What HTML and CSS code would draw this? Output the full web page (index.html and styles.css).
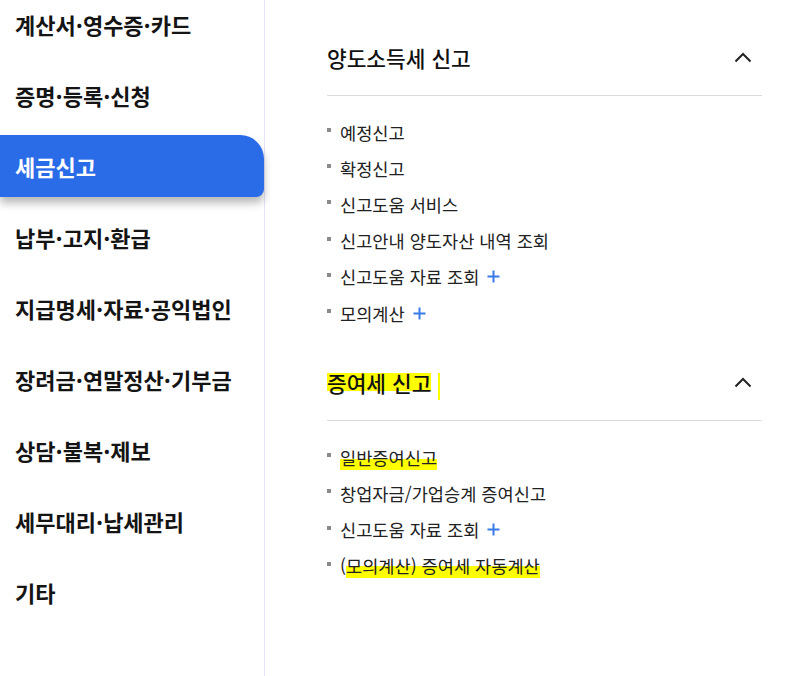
FILE: index.html
```html
<!DOCTYPE html>
<html lang="ko">
<head>
<meta charset="utf-8">
<title>세금신고</title>
<link rel="stylesheet" href="styles.css">
</head>
<body>
<div class="page">
  <nav class="side">
    <ul class="side-list">
      <li class="side-item">계산서·영수증·카드</li>
      <li class="side-item">증명·등록·신청</li>
      <li class="side-item active">세금신고</li>
      <li class="side-item">납부·고지·환급</li>
      <li class="side-item">지급명세·자료·공익법인</li>
      <li class="side-item">장려금·연말정산·기부금</li>
      <li class="side-item">상담·불복·제보</li>
      <li class="side-item">세무대리·납세관리</li>
      <li class="side-item">기타</li>
    </ul>
  </nav>
  <main class="content">
    <section class="group">
      <div class="group-head">
        <h2 class="group-title">양도소득세 신고</h2>
        <svg class="chev" width="18" height="11" viewBox="0 0 18 11"><path d="M1.5 9.5 L9 2 L16.5 9.5" fill="none" stroke="#222" stroke-width="2"/></svg>
      </div>
      <ul class="links">
        <li class="link"><span class="dot"></span>예정신고</li>
        <li class="link"><span class="dot"></span>확정신고</li>
        <li class="link"><span class="dot"></span>신고도움 서비스</li>
        <li class="link"><span class="dot"></span>신고안내 양도자산 내역 조회</li>
        <li class="link"><span class="dot"></span>신고도움 자료 조회<svg class="plus" width="13" height="13" viewBox="0 0 13 13"><path d="M6.5 0.5 V12.5 M0.5 6.5 H12.5" stroke="#3b7be9" stroke-width="2"/></svg></li>
        <li class="link"><span class="dot"></span>모의계산<svg class="plus" width="13" height="13" viewBox="0 0 13 13"><path d="M6.5 0.5 V12.5 M0.5 6.5 H12.5" stroke="#3b7be9" stroke-width="2"/></svg></li>
      </ul>
    </section>
    <section class="group">
      <div class="group-head">
        <h2 class="group-title"><span class="hl-title">증여세 신고</span></h2>
        <svg class="chev" width="18" height="11" viewBox="0 0 18 11"><path d="M1.5 9.5 L9 2 L16.5 9.5" fill="none" stroke="#222" stroke-width="2"/></svg>
      </div>
      <ul class="links">
        <li class="link"><span class="dot"></span><span class="hl-a">일반증여신고</span></li>
        <li class="link"><span class="dot"></span>창업자금/가업승계 증여신고</li>
        <li class="link"><span class="dot"></span>신고도움 자료 조회<svg class="plus" width="13" height="13" viewBox="0 0 13 13"><path d="M6.5 0.5 V12.5 M0.5 6.5 H12.5" stroke="#3b7be9" stroke-width="2"/></svg></li>
        <li class="link"><span class="dot"></span>(<span class="hl-b">모의계산) 증여세 자동계산</span></li>
      </ul>
    </section>
  </main>
</div>
</body>
</html>
```
FILE: styles.css
```css
* { box-sizing: border-box; }
html, body { margin: 0; padding: 0; background: #fff; }
body {
  font-family: "Noto Sans CJK KR", "Noto Sans", sans-serif;
  color: #111;
  overflow: hidden;
}
.page {
  display: flex;
  width: 804px;
  height: 676px;
  overflow: hidden;
}
.side {
  width: 265px;
  flex: none;
  border-right: 1px solid #e4e4f8;
  height: 676px;
}
.side-list {
  list-style: none;
  margin: -7px 0 0 0;
  padding: 0;
}
.side-item {
  height: 62px;
  margin-bottom: 9px;
  padding-left: 15px;
  display: flex;
  align-items: center;
  font-size: 22px;
  font-weight: 700;
  color: #141414;
  white-space: nowrap;
}
.side-item.active {
  background: #2a6be8;
  color: #fff;
  border-radius: 0 24px 8px 0;
  box-shadow: 0 6px 8px rgba(0, 0, 0, 0.28);
}
.content {
  flex: 1;
  padding: 19px 42px 0 62px;
}
.group-head {
  height: 77px;
  display: flex;
  align-items: center;
  justify-content: space-between;
  border-bottom: 1px solid #dcdcdc;
}
.group-title {
  margin: 0;
  font-size: 21.4px;
  font-weight: 500;
  color: #111;
}
.chev { margin-right: 10px; }
.links {
  list-style: none;
  margin: 0;
  padding: 18px 0 13px 0;
}
.link {
  height: 36.2px;
  display: flex;
  align-items: center;
  font-size: 17.6px;
  color: #222;
  white-space: nowrap;
}
.dot {
  width: 4px;
  height: 4px;
  background: #8a8a8a;
  margin-right: 9px;
  position: relative;
  top: -2px;
}
.plus { margin-left: 8px; }
.hl-title {
  position: relative;
  background: linear-gradient(#ffff00, #ffff00) no-repeat;
  background-size: 113px 18px;
  background-position: 0 6px;
}
.hl-title::after {
  content: "";
  position: absolute;
  left: 111px;
  top: 6px;
  width: 2px;
  height: 27px;
  background: #ffff00;
}
.hl-a {
  background: linear-gradient(#ffff00, #ffff00) no-repeat;
  background-size: 100% 13px;
  background-position: 0 14px;
}
.hl-b {
  background: linear-gradient(#ffff00, #ffff00) no-repeat;
  background-size: 100% 14px;
  background-position: 0 13px;
}
```
